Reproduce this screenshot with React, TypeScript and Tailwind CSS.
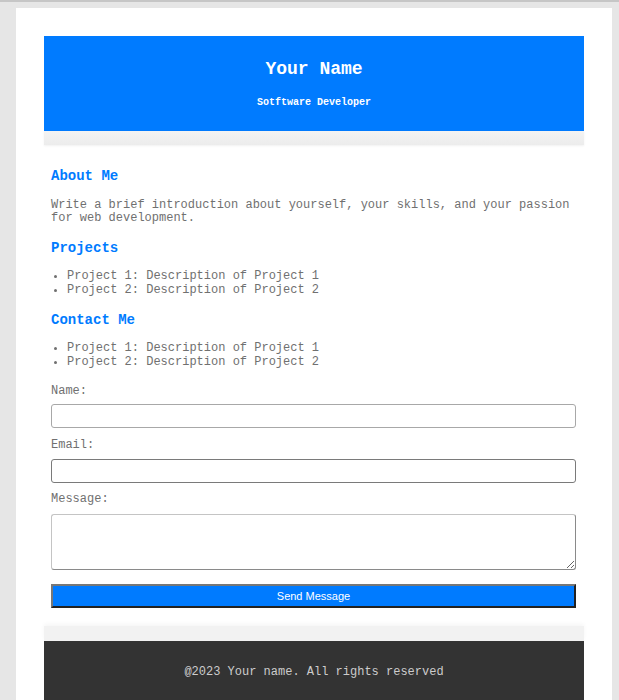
import React from "react";

const mono = { fontFamily: '"Liberation Mono", "Courier New", monospace' };

export default function App() {
  return (
    <div className="min-h-[700px] bg-[#e6e6e6] border-t-2 border-[#c6c6c6]" style={mono}>
      <div className="ml-[16px] mt-[6px] w-[596px] bg-white px-[28px] pt-[28px] pb-[40px]">
        <header className="flex flex-col items-center bg-[#007bff] pt-[23px] pb-[22px] text-white">
          <h1 className="text-[18px] leading-[20px] font-bold">Your Name</h1>
          <p className="mt-[18px] text-[10px] leading-[12px] font-bold">Sotftware Developer</p>
        </header>
        <div className="h-[14px] bg-gradient-to-b from-[#f3f3f3] to-[#ececec] shadow-[0_1px_2px_rgba(0,0,0,0.06)]" />
        <main className="pl-[7px] pr-[8px] pt-[23px] pb-[18px] text-[12px] text-[#707070]">
          <h2 className="text-[14px] leading-[16px] font-bold text-[#007bff]">About Me</h2>
          <p className="mt-[15px] leading-[13px]">
            Write a brief introduction about yourself, your skills, and your passion for web development.
          </p>
          <h2 className="mt-[15px] text-[14px] leading-[16px] font-bold text-[#007bff]">Projects</h2>
          <ul className="mt-[13px] list-disc pl-[16px] leading-[14px]">
            <li>Project 1: Description of Project 1</li>
            <li>Project 2: Description of Project 2</li>
          </ul>
          <h2 className="mt-[15px] text-[14px] leading-[16px] font-bold text-[#007bff]">Contact Me</h2>
          <ul className="mt-[13px] list-disc pl-[16px] leading-[14px]">
            <li>Project 1: Description of Project 1</li>
            <li>Project 2: Description of Project 2</li>
          </ul>
          <form className="flex flex-col" onSubmit={(e) => e.preventDefault()}>
            <label className="mt-[15px] leading-[14px]">Name:</label>
            <input
              type="text"
              className="mt-[6px] h-[24px] w-full rounded-[3px] border border-[#a8a8a8] bg-white"
            />
            <label className="mt-[10px] leading-[14px]">Email:</label>
            <input
              type="email"
              className="mt-[7px] h-[24px] w-full rounded-[3px] border border-[#7a7a7a] bg-white"
            />
            <label className="mt-[9px] leading-[14px]">Message:</label>
            <textarea className="mt-[8px] h-[56px] w-full rounded-[3px] border border-[#8a8a8a] border-t-[#c4c4c4] border-l-[#c4c4c4] bg-white" />
            <button
              type="submit"
              className="mt-[14px] h-[24px] w-full border-2 border-t-[#777] border-l-[#777] border-b-[#222] border-r-[#222] bg-[#007bff] text-[11px] text-white"
              style={{ fontFamily: '"Liberation Sans", Arial, sans-serif' }}
            >
              Send Message
            </button>
          </form>
        </main>
        <div className="h-[15px] bg-[#f2f2f2] shadow-[0_-2px_4px_rgba(0,0,0,0.04)]" />
        <footer className="bg-[#333] pt-[24px] pb-[30px] text-center text-[12px] leading-[14px] text-[#ccc]">
          @2023 Your name. All rights reserved
        </footer>
      </div>
    </div>
  );
}
